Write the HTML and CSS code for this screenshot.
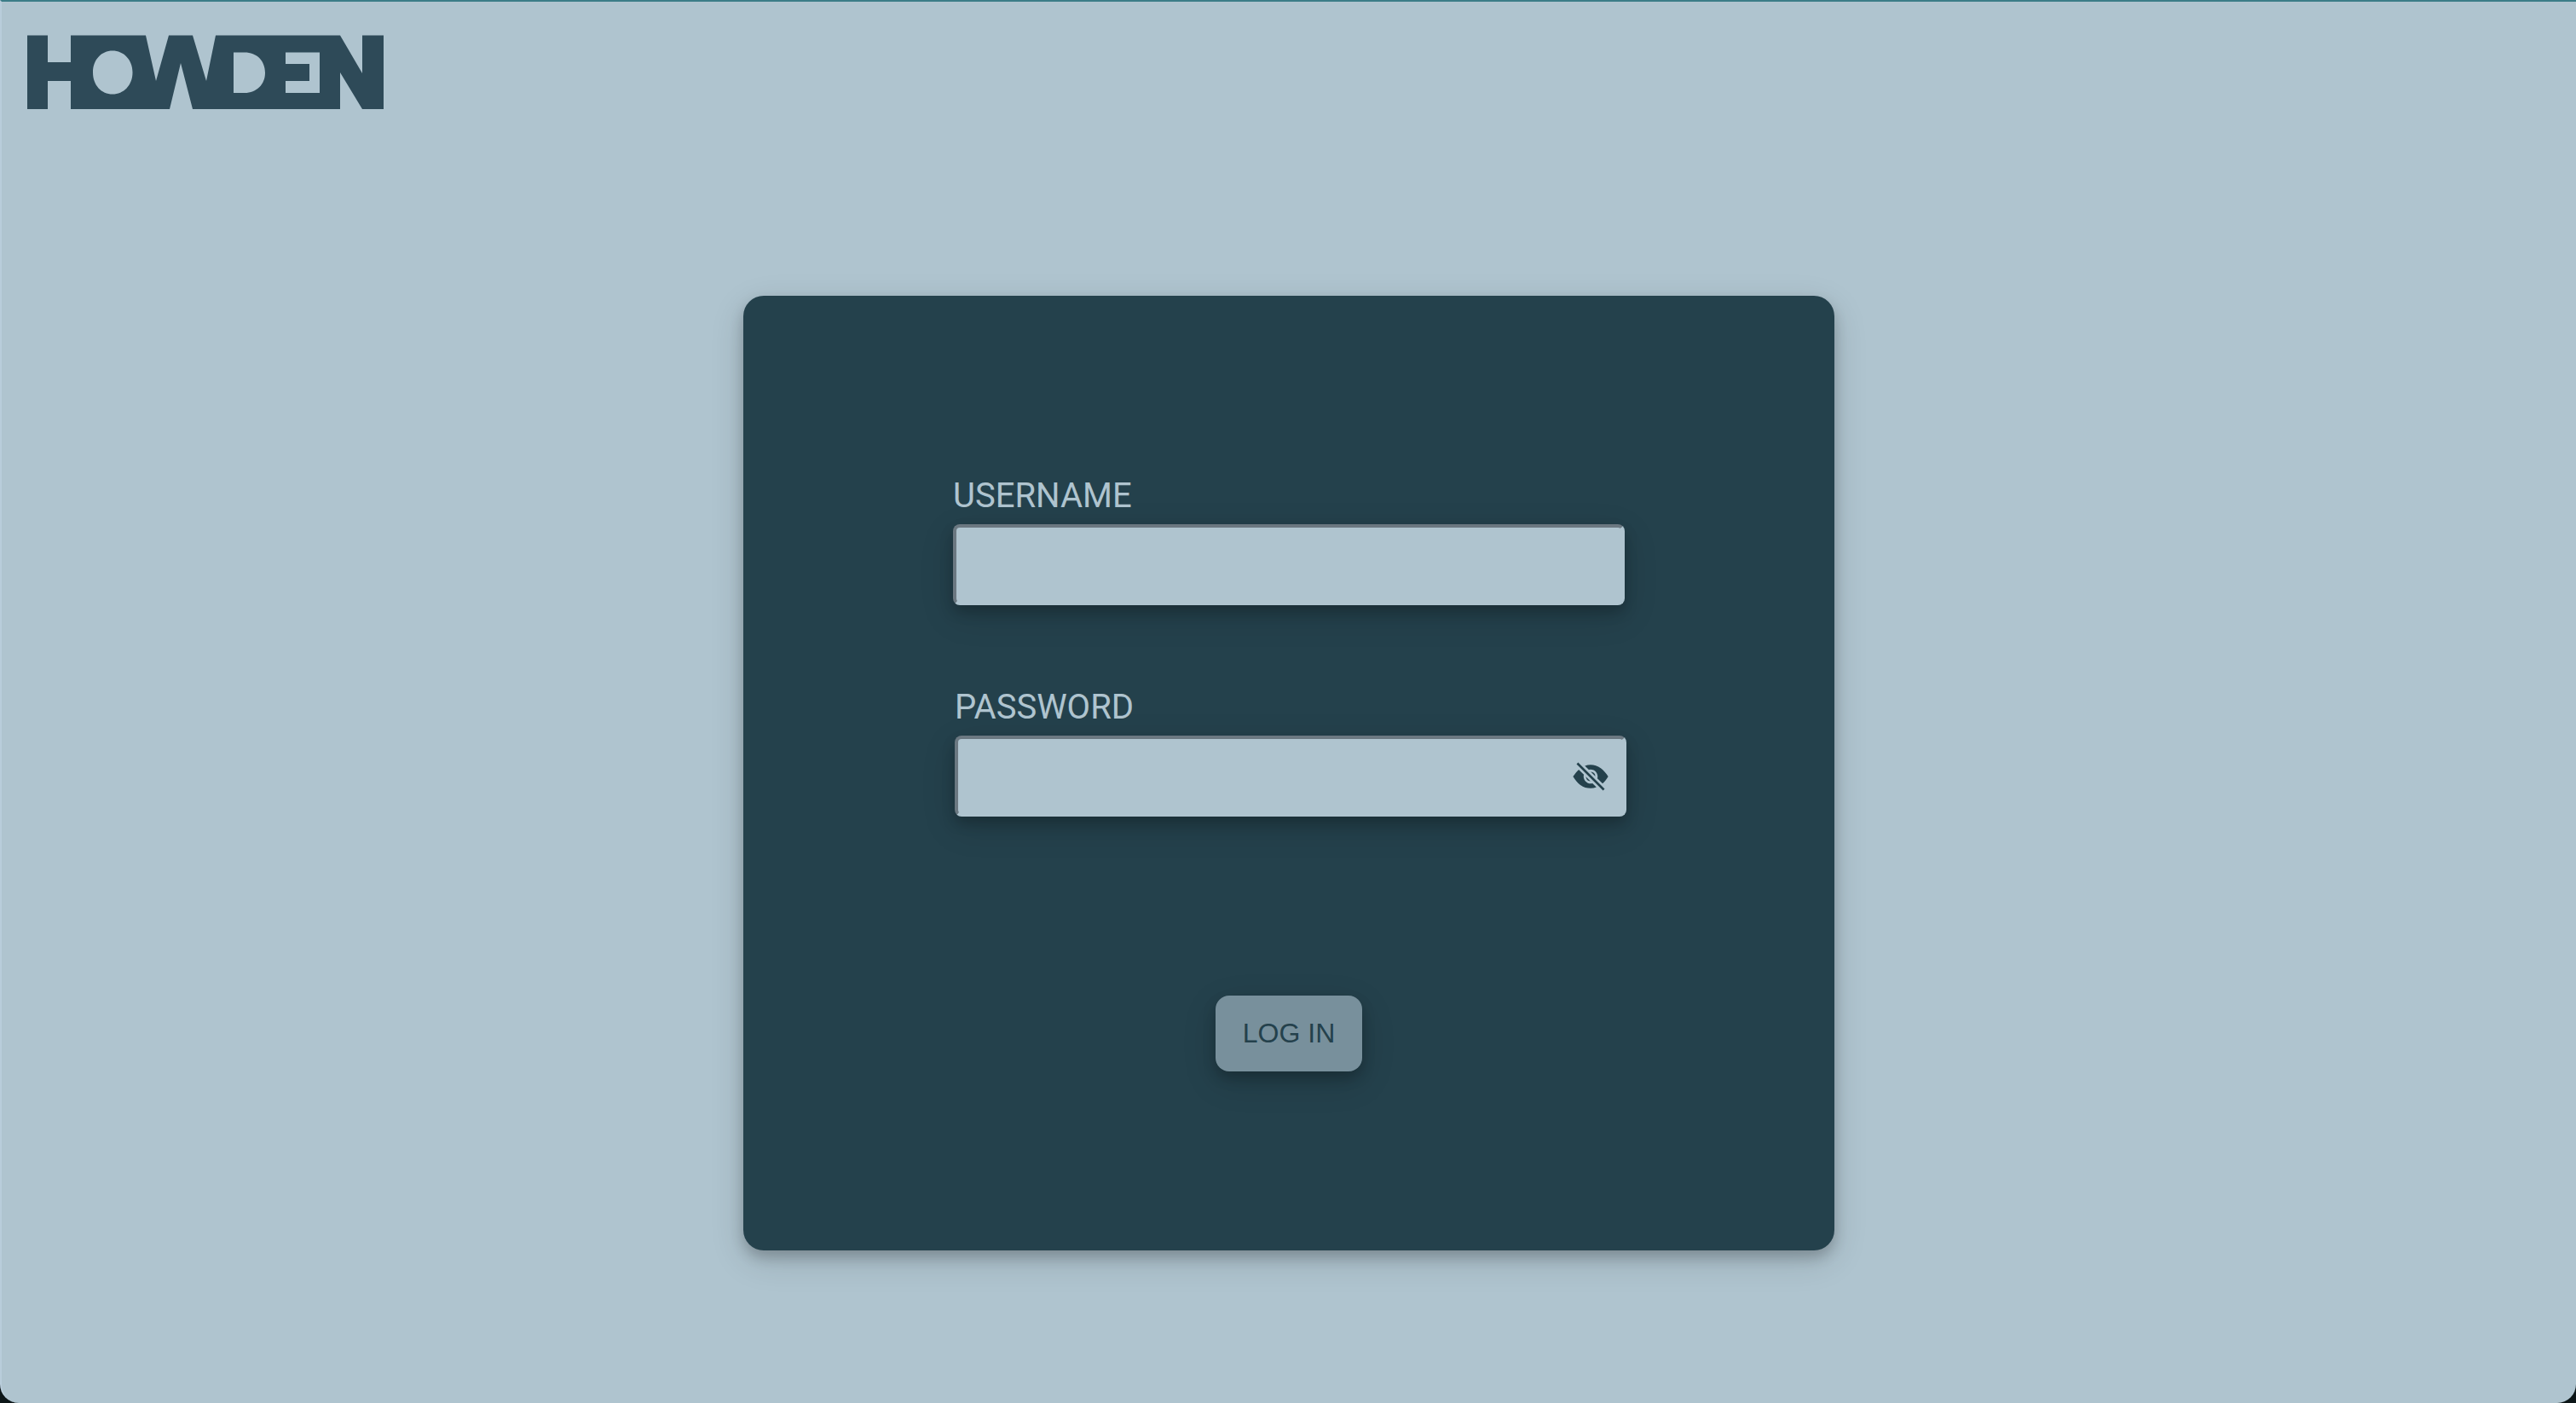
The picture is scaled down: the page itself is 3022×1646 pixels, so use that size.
FILE: index.html
```html
<!DOCTYPE html>
<html lang="en">
<head>
<meta charset="utf-8">
<title>Howden – Log in</title>
<link rel="stylesheet" href="styles.css">
</head>
<body>
<div class="page">
  <header class="header">
    <svg class="logo" viewBox="0 0 418 87" role="img" aria-label="Howden">
      <path fill-rule="evenodd" d="M0 0.500H24V32H51V0.500H139L151 54L166 0.500H194L210 54L221 0.500H367L393 45V0.500H418V87H393L367 44V87H194L180 33L167 87H51V54H24V87H0ZM100 18.500C87 18.500 77 29 77 44C77 59 87 69.500 100 69.500C113 69.500 123.500 59 123.500 44C123.500 29 113 18.500 100 18.500ZM242 20.500V68H255C269 68 279 58 279 44.500C279 30 269 20.500 255 20.500ZM303 20.500V34H331V54H303V68H343V20.500Z"/>
    </svg>
  </header>
  <main class="main">
    <form class="card">
      <div class="field">
        <label class="label" for="username">USERNAME</label>
        <input class="input" id="username" name="username" type="text">
      </div>
      <div class="field field-password">
        <label class="label" for="password">PASSWORD</label>
        <div class="input-wrap">
          <input class="input" id="password" name="password" type="password">
          <button class="toggle" type="button" aria-label="Show password">
            <svg class="eye" viewBox="0 0 512 512" aria-hidden="true">
              <path d="M63.998 86.004l21.998-21.998L448 426.010l-21.998 21.998zM259.340 192.090l60.570 60.570a64.070 64.070 0 00-60.570-60.570zM252.660 319.910l-60.570-60.570a64.070 64.070 0 0060.570 60.570z"/>
              <path d="M256 352a96 96 0 01-92.600-121.340l-69.070-69.080C66.120 187.420 39.240 221.140 16 256c26.420 44 62.560 89.240 100.200 115.180C159.380 400.920 206.330 416 255.760 416A233.470 233.470 0 00335 402.200l-53.610-53.600A95.840 95.840 0 01256 352zM256 160a96 96 0 0192.600 121.340L419.260 352c29.150-26.250 56.070-61.560 76.740-96-26.380-43.430-62.900-88.560-101.180-114.820C351.100 111.200 304.310 96 255.760 96a222.920 222.920 0 00-78.210 14.290l53.110 53.110A95.840 95.840 0 01256 160z"/>
            </svg>
          </button>
        </div>
      </div>
      <button class="submit" type="submit">LOG IN</button>
    </form>
  </main>
</div>
</body>
</html>
```
FILE: styles.css
```css
:root {
  --mist: #afc4cf;
  --deep: #24414c;
  --shadow: 0 8px 16px rgba(0, 0, 0, 0.2), 0 12px 40px rgba(0, 0, 0, 0.14);
}

* {
  box-sizing: border-box;
}

body {
  margin: 0;
  background: #0c1618;
  font-family: Roboto, "Liberation Sans", sans-serif;
}

.page {
  display: flex;
  flex-direction: column;
  min-height: 100vh;
  border-top: 2px solid #3b7d88;
  border-left: 2px solid #b9cddb;
  border-radius: 0 0 22px 22px;
  background: var(--mist);
}

.header {
  padding: 39px 30px 0;
}

.logo {
  display: block;
  width: 418px;
  height: 87px;
  fill: #2e4a58;
}

.main {
  display: flex;
  justify-content: center;
  padding: 219px 32px 64px;
}

.card {
  display: flex;
  flex-direction: column;
  width: 100%;
  max-width: 1280px;
  padding: 211px 244px 210px 246px;
  border-radius: 24px;
  background: var(--deep);
  box-shadow: var(--shadow);
}

.field {
  display: flex;
  flex-direction: column;
  gap: 9px;
  margin-right: 2px;
}

.field-password {
  margin: 96px 0 0 2px;
}

.label {
  color: var(--mist);
  font-size: 40px;
  line-height: 48px;
}

.input-wrap {
  position: relative;
}

.input {
  display: block;
  width: 100%;
  height: 95px;
  padding: 0 16px;
  border: 4px solid;
  border-color: #6b7881 var(--mist) var(--mist) #6b7881;
  border-radius: 8px;
  outline: none;
  background: var(--mist);
  box-shadow: var(--shadow);
  color: var(--deep);
  font: inherit;
  font-size: 32px;
}

.input-wrap .input {
  padding-right: 80px;
}

.toggle {
  position: absolute;
  top: 0;
  right: 0;
  bottom: 0;
  display: flex;
  align-items: center;
  padding: 0 20px;
  border: 0;
  background: none;
  cursor: pointer;
}

.eye {
  width: 44px;
  height: 44px;
  fill: var(--deep);
}

.submit {
  align-self: center;
  margin: 210px 2px 0 0;
  padding: 0 32px;
  border: 0;
  border-radius: 16px;
  background: #78909c;
  box-shadow: var(--shadow);
  color: var(--deep);
  font-family: "Liberation Sans", Arial, sans-serif;
  font-size: 32px;
  line-height: 89px;
  cursor: pointer;
}
```
